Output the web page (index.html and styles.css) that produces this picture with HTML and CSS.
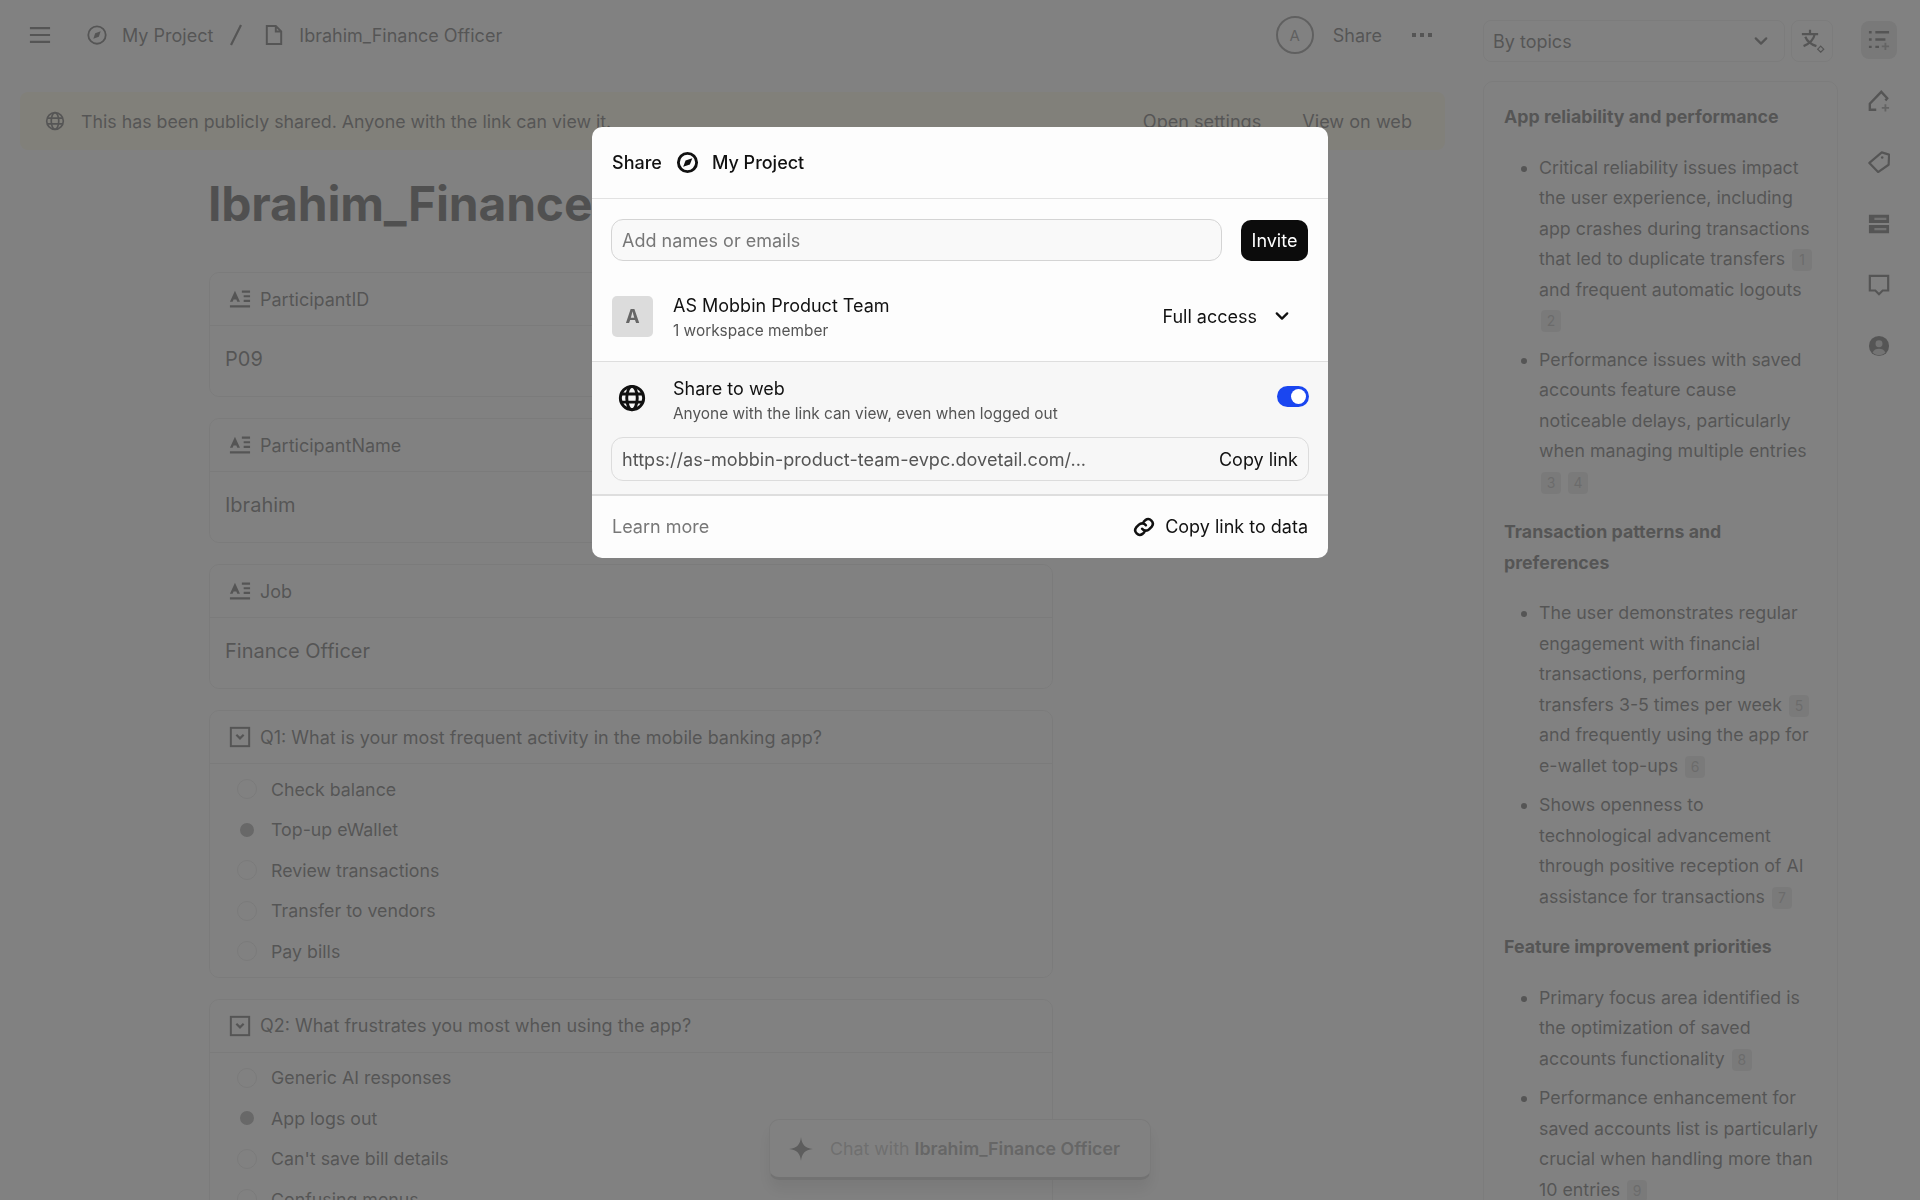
FILE: index.html
```html
<!DOCTYPE html>
<html lang="en">
<head>
    <meta charset="UTF-8">
    <meta name="viewport" content="width=device-width, initial-scale=1.0">
    <title>Ibrahim_Finance Officer</title>
    <link rel="stylesheet" href="styles.css">
</head>
<body>
    <svg class="icon-defs" width="0" height="0">
        <symbol id="i-compass" viewBox="0 0 24 24">
            <circle cx="12" cy="12" r="9.500" fill="none" stroke="currentColor" stroke-width="2"/>
            <path d="M16 8l-2 6-6 2 2-6z" fill="currentColor"/>
        </symbol>
        <symbol id="i-globe" viewBox="0 0 24 24">
            <g fill="none" stroke="currentColor" stroke-width="2">
                <circle cx="12" cy="12" r="10"/>
                <ellipse cx="12" cy="12" rx="4.500" ry="10"/>
                <path d="M2.500 8.500h19M2.500 15.500h19"/>
            </g>
        </symbol>
        <symbol id="i-text" viewBox="0 0 24 24">
            <path d="M6.500 3L1 15h3l1-2.500h3l1 2.500h3z" fill="currentColor"/>
            <path d="M14 4h9M16 9h7M16 14h7M1 20h22" fill="none" stroke="currentColor" stroke-width="2.400"/>
        </symbol>
        <symbol id="i-select" viewBox="0 0 24 24">
            <rect x="2" y="2" width="20" height="20" fill="none" stroke="currentColor" stroke-width="2.200"/>
            <path d="M8 9.500l4 4 4-4" fill="none" stroke="currentColor" stroke-width="2.400"/>
        </symbol>
        <symbol id="i-chevron" viewBox="0 0 24 24">
            <path d="M5 8.500l7 7 7-7" fill="none" stroke="currentColor" stroke-width="3" stroke-linecap="round" stroke-linejoin="round"/>
        </symbol>
    </svg>

    <div class="page">
        <main class="main">
            <header class="topbar">
                <svg class="menu-icon" viewBox="0 0 24 24"><path d="M1 4.500h22M1 12h22M1 19.500h22" fill="none" stroke="currentColor" stroke-width="2.200"/></svg>
                <svg class="crumb-icon"><use href="#i-compass"/></svg>
                <span class="crumb">My Project</span>
                <svg class="crumb-slash" viewBox="0 0 14 24"><path d="M12 2L2 22" fill="none" stroke="currentColor" stroke-width="2.200"/></svg>
                <svg class="crumb-icon doc-icon" viewBox="0 0 20 24"><path d="M2 2h10l6 6v14H2z M12 2v6h6" fill="none" stroke="currentColor" stroke-width="2.200"/></svg>
                <span class="crumb">Ibrahim_Finance Officer</span>
                <div class="topbar-right">
                    <span class="avatar">A</span>
                    <span class="crumb">Share</span>
                    <svg class="dots" viewBox="0 0 20 4"><path d="M0 0h4v4H0zM8 0h4v4H8zM16 0h4v4h-4z" fill="currentColor"/></svg>
                </div>
            </header>

            <div class="banner">
                <svg class="banner-icon"><use href="#i-globe"/></svg>
                <span class="banner-text">This has been publicly shared. Anyone with the link can view it.</span>
                <span class="banner-link">Open settings</span>
                <span class="banner-link">View on web</span>
            </div>

            <div class="doc">
                <h1 class="doc-title">Ibrahim_Finance Officer</h1>

                <section class="field">
                    <div class="field-head"><svg class="field-icon"><use href="#i-text"/></svg>ParticipantID</div>
                    <div class="field-value">P09</div>
                </section>
                <section class="field">
                    <div class="field-head"><svg class="field-icon"><use href="#i-text"/></svg>ParticipantName</div>
                    <div class="field-value">Ibrahim</div>
                </section>
                <section class="field">
                    <div class="field-head"><svg class="field-icon"><use href="#i-text"/></svg>Job</div>
                    <div class="field-value">Finance Officer</div>
                </section>

                <section class="field">
                    <div class="field-head"><svg class="field-icon"><use href="#i-select"/></svg>Q1: What is your most frequent activity in the mobile banking app?</div>
                    <ul class="options">
                        <li class="option"><span class="radio"></span>Check balance</li>
                        <li class="option"><span class="radio checked"></span>Top-up eWallet</li>
                        <li class="option"><span class="radio"></span>Review transactions</li>
                        <li class="option"><span class="radio"></span>Transfer to vendors</li>
                        <li class="option"><span class="radio"></span>Pay bills</li>
                    </ul>
                </section>
                <section class="field">
                    <div class="field-head"><svg class="field-icon"><use href="#i-select"/></svg>Q2: What frustrates you most when using the app?</div>
                    <ul class="options">
                        <li class="option"><span class="radio"></span>Generic AI responses</li>
                        <li class="option"><span class="radio checked"></span>App logs out</li>
                        <li class="option"><span class="radio"></span>Can't save bill details</li>
                        <li class="option"><span class="radio"></span>Confusing menus</li>
                    </ul>
                </section>
            </div>

            <div class="chat-box">
                <svg class="chat-icon" viewBox="0 0 24 24"><path d="M12 0c1 7.500 3.500 11 12 12-8.500 1-11 4.500-12 12-1-7.500-3.500-11-12-12 8.500-1 11-4.500 12-12z" fill="currentColor"/></svg>
                <span class="chat-text">Chat with <b>Ibrahim_Finance Officer</b></span>
            </div>
        </main>

        <aside class="side">
            <div class="side-tools">
                <div class="topic-select">By topics<svg class="chevron"><use href="#i-chevron"/></svg></div>
                <div class="translate">
                    <svg viewBox="0 0 28 28"><path d="M1 6h19M10.500 1v5M16 6c-1 6-6 11-13 14M5 9c2 5 7 9 13 11" fill="none" stroke="currentColor" stroke-width="2.600"/><path d="M23 20l3.500 3.500-3.500 3.500-3.500-3.500z" fill="none" stroke="currentColor" stroke-width="1.500"/></svg>
                </div>
            </div>
            <div class="summary">
                <h3>App reliability and performance</h3>
                <ul>
                    <li>Critical reliability issues impact the user experience, including app crashes during transactions that led to duplicate transfers <span class="cite">1</span> and frequent automatic logouts <span class="cite">2</span></li>
                    <li>Performance issues with saved accounts feature cause noticeable delays, particularly when managing multiple entries <span class="cite">3</span> <span class="cite">4</span></li>
                </ul>
                <h3>Transaction patterns and preferences</h3>
                <ul>
                    <li>The user demonstrates regular engagement with financial transactions, performing transfers 3-5 times per week <span class="cite">5</span> and frequently using the app for e-wallet top-ups <span class="cite">6</span></li>
                    <li>Shows openness to technological advancement through positive reception of AI assistance for transactions <span class="cite">7</span></li>
                </ul>
                <h3>Feature improvement priorities</h3>
                <ul>
                    <li>Primary focus area identified is the optimization of saved accounts functionality <span class="cite">8</span></li>
                    <li>Performance enhancement for saved accounts list is particularly crucial when handling more than 10 entries <span class="cite">9</span></li>
                </ul>
            </div>
        </aside>

        <nav class="rail">
            <div class="rail-btn active">
                <svg viewBox="0 0 24 24"><path d="M1 3.500h3M8 3.500h15M1 11.500h3M8 11.500h11M1 19.500h3M8 19.500h4" fill="none" stroke="currentColor" stroke-width="2.600"/><path d="M19 15v8M15 19h8" fill="none" stroke="#777" stroke-width="2"/></svg>
            </div>
            <div class="rail-btn">
                <svg viewBox="0 0 24 24"><path d="M9 21.500H2v-6.500L14.500 2l6.500 7-2 2.500" fill="none" stroke="currentColor" stroke-width="2.600"/><path d="M19 15.500v8M15 19.500h8" fill="none" stroke="#777" stroke-width="2"/></svg>
            </div>
            <div class="rail-btn">
                <svg viewBox="0 0 24 24"><path d="M1.500 13L15 1.500l8 2.500-.5 11L11 23z" fill="none" stroke="currentColor" stroke-width="2.400" stroke-linejoin="round"/><circle cx="15.500" cy="7" r="1.400" fill="currentColor"/></svg>
            </div>
            <div class="rail-btn">
                <svg viewBox="0 0 24 24"><path d="M1 2h22v9H1zM1 13h22v9H1z" fill="currentColor"/><path d="M7 6.500h13M7 17.500h13" fill="none" stroke="#bbb" stroke-width="2.400"/></svg>
            </div>
            <div class="rail-btn">
                <svg viewBox="0 0 24 24"><path d="M2 2h20v16h-6l-4 4-4-4H2z" fill="none" stroke="currentColor" stroke-width="2.400"/></svg>
            </div>
            <div class="rail-btn">
                <svg viewBox="0 0 24 24"><circle cx="12" cy="12" r="11" fill="currentColor"/><circle cx="12" cy="9.500" r="3.800" fill="#bbb"/><path d="M5 19c1.500-3 4-4 7-4s5.500 1 7 4c-2 2-4.500 3-7 3s-5-1-7-3z" fill="#bbb"/></svg>
            </div>
        </nav>
    </div>

    <!-- Share dialog -->
    <div class="overlay">
        <div class="modal">
            <div class="modal-head">
                <span>Share</span>
                <svg class="modal-compass" viewBox="0 0 24 24"><circle cx="12" cy="12" r="9.500" fill="none" stroke="currentColor" stroke-width="3"/><path d="M17 7.500l-2.500 6.500-7 2.500 2.500-6.500z" fill="currentColor"/></svg>
                <span>My Project</span>
            </div>

            <div class="invite-row">
                <div class="invite-input">Add names or emails</div>
                <button type="button" class="invite-btn">Invite</button>
            </div>

            <div class="member-row">
                <span class="member-avatar">A</span>
                <div class="member-info">
                    <div class="row-title">AS Mobbin Product Team</div>
                    <div class="row-sub">1 workspace member</div>
                </div>
                <span class="access">Full access<svg class="access-chevron"><use href="#i-chevron"/></svg></span>
            </div>

            <div class="web-section">
                <div class="web-row">
                    <svg class="web-globe" viewBox="0 0 24 24"><g fill="none" stroke="currentColor" stroke-width="2.500"><circle cx="12" cy="12" r="10"/><ellipse cx="12" cy="12" rx="4.500" ry="10"/><path d="M2.500 8.500h19M2.500 15.500h19"/></g></svg>
                    <div class="member-info">
                        <div class="row-title">Share to web</div>
                        <div class="row-sub">Anyone with the link can view, even when logged out</div>
                    </div>
                    <span class="toggle"></span>
                </div>
                <div class="link-box">
                    <span class="link-url">https://as-mobbin-product-team-evpc.dovetail.com/...</span>
                    <span class="copy-link">Copy link</span>
                </div>
            </div>

            <div class="modal-foot">
                <span class="learn-more">Learn more</span>
                <span class="copy-data">
                    <svg class="link-icon" viewBox="0 0 24 24"><path d="M10 14a5 5 0 0 0 7.500.5l3-3a5 5 0 0 0-7-7l-1.700 1.700M14 10a5 5 0 0 0-7.500-.5l-3 3a5 5 0 0 0 7 7l1.700-1.700" fill="none" stroke="currentColor" stroke-width="2.800" stroke-linecap="round"/></svg>
                    Copy link to data
                </span>
            </div>
        </div>
    </div>
</body>
</html>
```

FILE: styles.css
```css
/* Global font and page frame */
body {
    margin: 0;
    height: 1200px;
    overflow: hidden;
    font-family: Inter, "Liberation Sans", sans-serif;
    font-size: 16px;
    color: #1a1a1a;
    background-color: #fff;
}

.icon-defs {
    position: absolute;
}

ul {
    margin: 0;
    padding: 0;
}

.page {
    display: flex;
    height: 1200px;
    overflow: hidden;
}

/* Main column */
.main {
    position: relative;
    width: 1483px;
    flex: none;
    padding-left: 20px;
    box-sizing: border-box;
}

.topbar {
    display: flex;
    align-items: center;
    height: 70px;
    padding-left: 9px;
    font-size: 18px;
    color: #333;
}

.menu-icon {
    width: 22px;
    height: 22px;
    margin-right: 35px;
}

.crumb-icon {
    width: 22px;
    height: 22px;
    margin-right: 14px;
}

.doc-icon {
    width: 18px;
    height: 22px;
    margin-right: 16px;
}

.crumb-slash {
    width: 14px;
    height: 24px;
    margin: 0 22px 0 16px;
}

.crumb {
    white-space: nowrap;
}

.topbar-right {
    display: flex;
    align-items: center;
    margin-left: auto;
    margin-right: 51px;
}

.avatar {
    display: flex;
    align-items: center;
    justify-content: center;
    width: 34px;
    height: 34px;
    margin-right: 19px;
    border: 2px solid #666;
    border-radius: 50%;
    font-size: 15px;
    color: #666;
}

.dots {
    width: 20px;
    height: 4px;
    margin-left: 30px;
}

/* Public share banner */
.banner {
    display: flex;
    align-items: center;
    width: 1425px;
    height: 58px;
    margin-top: 22px;
    padding: 0 33px 0 25px;
    box-sizing: border-box;
    border-radius: 8px;
    background-color: #fff8dc;
    font-size: 17.800px;
    color: #333;
}

.banner-icon {
    width: 20px;
    height: 20px;
    margin-right: 16px;
}

.banner-text {
    margin-right: auto;
}

.banner-link {
    margin-left: 41px;
    font-size: 18.100px;
}

/* Document */
.doc {
    width: 844px;
    margin-left: 189px;
}

.doc-title {
    margin: 0 0 0 -1px;
    padding: 22px 0 36px;
    font-size: 48px;
    line-height: 64px;
    font-weight: 700;
    letter-spacing: -0.2px;
    white-space: nowrap;
}

.field {
    margin-bottom: 21px;
    border: 1px solid #e4e4e4;
    border-radius: 10px;
}

.field-head {
    display: flex;
    align-items: center;
    height: 52px;
    padding-left: 19px;
    border-bottom: 1px solid #e4e4e4;
    font-size: 18px;
    color: #333;
}

.field-icon {
    width: 22px;
    height: 22px;
    margin-right: 9px;
}

.field-value {
    height: 70px;
    padding-left: 15px;
    font-size: 20px;
    line-height: 66px;
    color: #333;
}

.options {
    list-style: none;
    padding: 5px 0 5px 27px;
}

.option {
    display: flex;
    align-items: center;
    height: 40.500px;
    font-size: 17.800px;
    color: #333;
}

.radio {
    width: 20px;
    height: 20px;
    margin-right: 14px;
    border: 1px solid #ddd;
    border-radius: 50%;
    box-sizing: border-box;
}

.radio.checked {
    border: 3.500px solid #fff;
    background-color: #888;
}

/* Chat box at the bottom */
.chat-box {
    position: absolute;
    left: 769px;
    top: 1119px;
    display: flex;
    align-items: center;
    width: 382px;
    height: 61px;
    padding-left: 19px;
    box-sizing: border-box;
    border: 1px solid #ddd;
    border-bottom: 3px solid #b8b8b8;
    border-radius: 10px;
    background-color: #fff;
    box-shadow: 0 10px 14px rgba(0, 0, 0, 0.15);
    font-size: 17.800px;
    color: #aaa;
}

.chat-icon {
    width: 24px;
    height: 24px;
    margin-right: 17px;
    color: #555;
}

.chat-text b {
    font-weight: 600;
    color: #808080;
}

/* Right hand summary */
.side {
    width: 355px;
    flex: none;
}

.side-tools {
    display: flex;
    height: 81px;
    padding-top: 20px;
    box-sizing: border-box;
}

.topic-select {
    display: flex;
    align-items: center;
    justify-content: space-between;
    width: 302px;
    height: 42px;
    padding: 0 14px 0 9px;
    box-sizing: border-box;
    border: 1px solid #e6e6e6;
    border-radius: 8px;
    font-size: 18px;
    color: #333;
}

.chevron {
    width: 18px;
    height: 18px;
    color: #333;
}

.translate {
    width: 42px;
    height: 42px;
    margin-left: 6px;
    padding: 8px 9px;
    box-sizing: border-box;
    border: 1px solid #e6e6e6;
    border-radius: 8px;
    color: #333;
}

.translate svg {
    display: block;
    width: 24px;
    height: 24px;
}

.summary {
    height: 1200px;
    padding: 0 16px 0 20px;
    box-sizing: border-box;
    border: 1px solid #e6e6e6;
    border-radius: 10px;
    font-size: 17.800px;
    line-height: 30.500px;
    color: #333;
}

.summary h3 {
    margin: 0;
    padding-top: 20px;
    font-size: 17.800px;
    line-height: 30.500px;
    font-weight: 700;
}

.summary ul + h3 {
    padding-top: 11px;
}

.summary ul {
    padding: 20px 0 0 35px;
}

.summary li {
    margin-bottom: 9px;
}

.cite {
    display: inline-block;
    min-width: 20px;
    margin-left: 2px;
    border-radius: 4px;
    background-color: #dedede;
    font-size: 14px;
    line-height: 22px;
    text-align: center;
    color: #999;
}

/* Icon rail */
.rail {
    display: flex;
    flex-direction: column;
    align-items: center;
    width: 82px;
    flex: none;
    padding-top: 21px;
    color: #333;
    box-sizing: border-box;
}

.rail-btn {
    display: flex;
    align-items: center;
    justify-content: center;
    width: 36px;
    height: 38px;
    margin-bottom: 23.200px;
    border-radius: 8px;
}

.rail-btn.active {
    background-color: #d8d8d8;
}

.rail-btn svg {
    width: 22px;
    height: 22px;
}

/* Dimmed layer and share dialog */
.overlay {
    position: fixed;
    inset: 0;
    display: flex;
    justify-content: center;
    align-items: flex-start;
    padding-top: 127px;
    background-color: rgba(95, 95, 95, 0.79);
}

.modal {
    width: 736px;
    border-radius: 10px;
    background-color: #fdfdfd;
    overflow: hidden;
    color: #111;
}

.modal-head {
    display: flex;
    align-items: center;
    height: 71px;
    padding: 0 20px;
    border-bottom: 1px solid #e2e2e2;
    font-size: 18px;
    font-weight: 500;
}

.modal-compass {
    width: 23px;
    height: 23px;
    margin: 0 13px 0 14px;
    color: #111;
}

.invite-row {
    display: flex;
    align-items: center;
    padding: 20px 20px 0 19px;
}

.invite-input {
    flex: 1;
    height: 42px;
    padding-left: 10px;
    box-sizing: border-box;
    border: 1px solid #d4d4d4;
    border-radius: 12px;
    background-color: #f9f9f9;
    font-size: 18px;
    line-height: 41px;
    color: #777;
}

.invite-btn {
    width: 67px;
    height: 41px;
    margin-left: 19px;
    border: none;
    border-radius: 10px;
    background-color: #0c0c0c;
    font-family: inherit;
    font-size: 18px;
    color: #fff;
}

.member-row {
    display: flex;
    align-items: center;
    height: 101px;
    padding: 10px 20px 0 20px;
    box-sizing: border-box;
    border-bottom: 1px solid #dedede;
}

.member-row .member-info {
    margin-top: 2px;
}

.member-avatar {
    display: flex;
    align-items: center;
    justify-content: center;
    width: 41px;
    height: 41px;
    margin-right: 20px;
    border-radius: 5px;
    background-color: #dcdcdc;
    font-size: 19px;
    font-weight: 700;
    color: #666;
}

.member-info {
    flex: 1;
}

.row-title {
    font-size: 18px;
    line-height: 25px;
}

.row-sub {
    margin-top: 2px;
    font-size: 15.400px;
    line-height: 21px;
    color: #555;
}

.access {
    display: flex;
    align-items: center;
    font-size: 18px;
}

.access-chevron {
    width: 18px;
    height: 18px;
    margin: 0 17px 0 16px;
}

.web-section {
    padding: 14px 19px 13px 19px;
    border-bottom: 2px solid #dedede;
    background-color: #f7f7f7;
}

.web-row {
    display: flex;
    align-items: flex-start;
    height: 61px;
    padding-left: 7px;
}

.web-globe {
    width: 28px;
    height: 28px;
    margin: 8px 27px 0 0;
}

.toggle {
    position: relative;
    width: 32px;
    height: 21px;
    margin-top: 10px;
    border-radius: 11px;
    background-color: #1a46f0;
}

.toggle::after {
    content: "";
    position: absolute;
    right: 3px;
    top: 3px;
    width: 15px;
    height: 15px;
    border-radius: 50%;
    background-color: #fff;
}

.link-box {
    display: flex;
    align-items: center;
    justify-content: space-between;
    height: 42px;
    padding: 0 10px;
    border: 1px solid #dcdcdc;
    border-radius: 12px;
    font-size: 18px;
}

.link-url {
    font-size: 18.100px;
    color: #555;
}

.modal-foot {
    display: flex;
    align-items: center;
    justify-content: space-between;
    height: 61.500px;
    padding: 0 20px 0 20px;
    font-size: 18px;
}

.learn-more {
    color: #777;
}

.copy-data {
    display: flex;
    align-items: center;
}

.link-icon {
    width: 22px;
    height: 22px;
    margin-right: 10px;
}
```
